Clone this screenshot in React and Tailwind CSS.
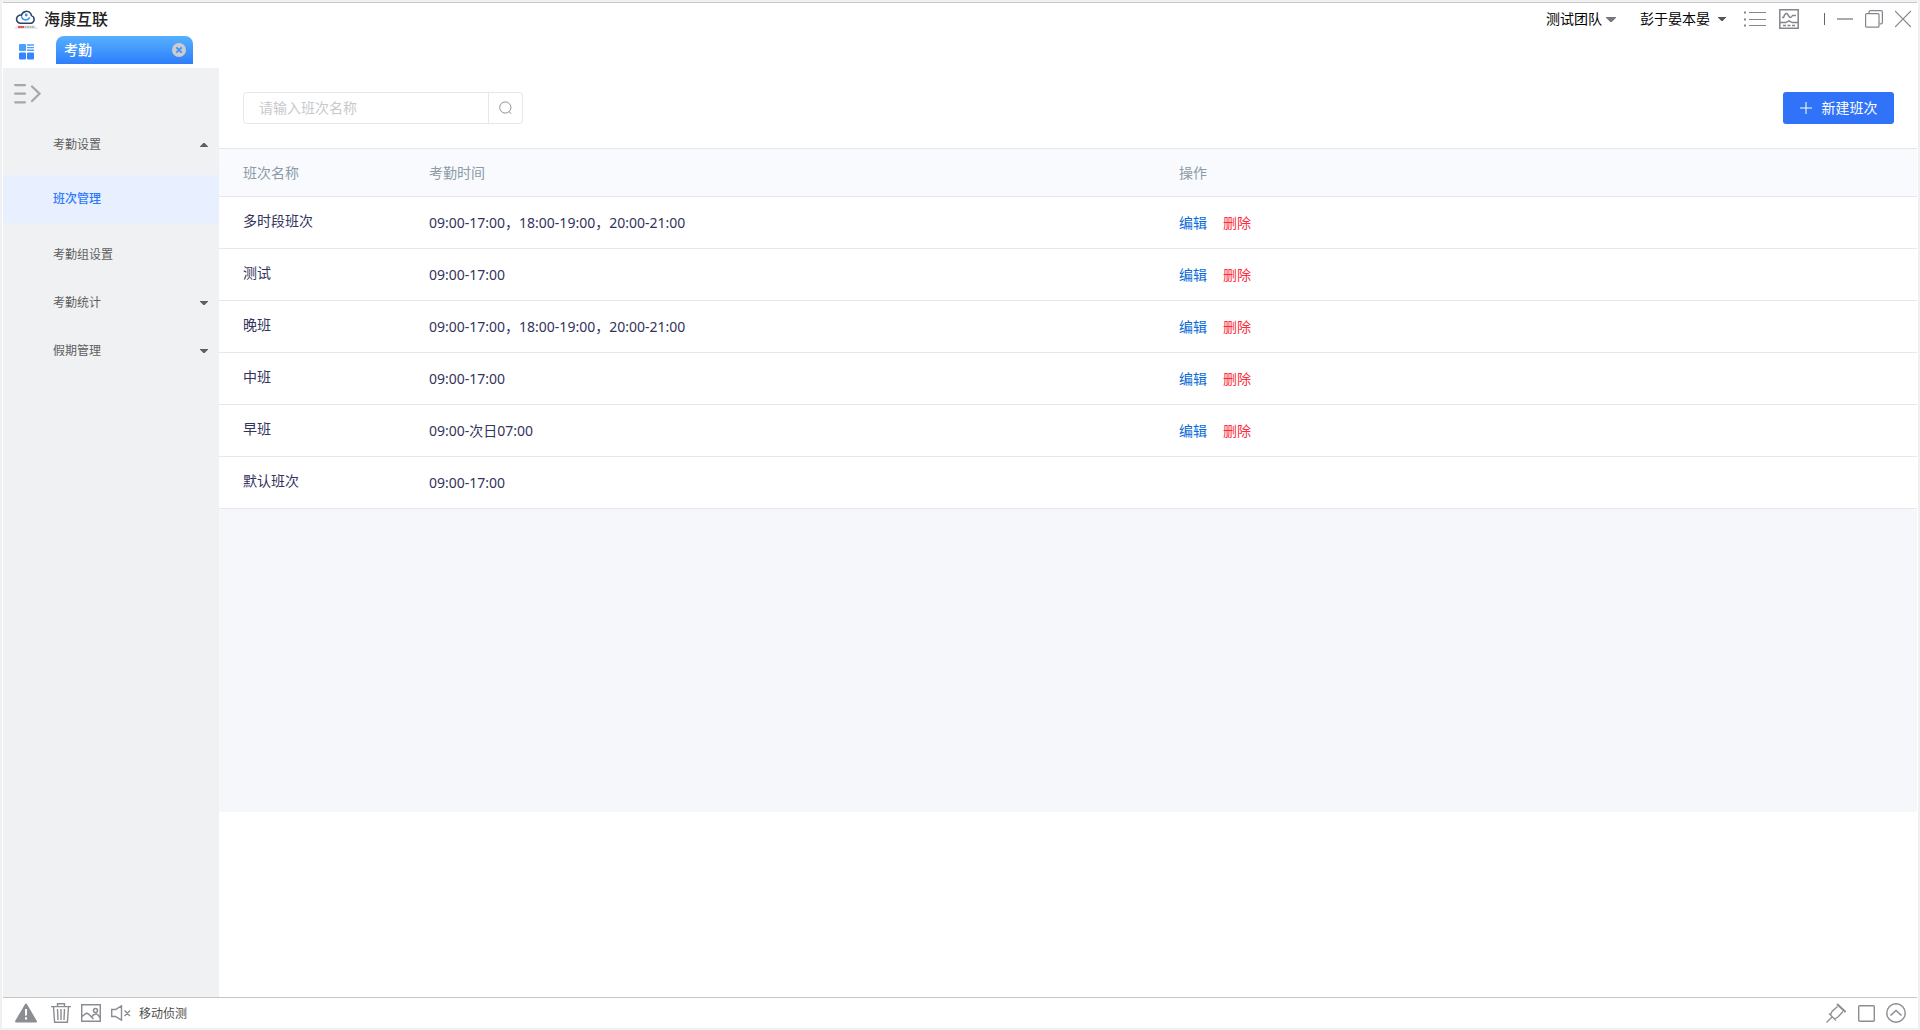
import { useState } from 'react';

const shifts = [
  { name: '多时段班次', time: '09:00-17:00，18:00-19:00，20:00-21:00', editable: true },
  { name: '测试', time: '09:00-17:00', editable: true },
  { name: '晚班', time: '09:00-17:00，18:00-19:00，20:00-21:00', editable: true },
  { name: '中班', time: '09:00-17:00', editable: true },
  { name: '早班', time: '09:00-次日07:00', editable: true },
  { name: '默认班次', time: '09:00-17:00', editable: false },
];

function Caret({ up, large }) {
  return (
    <svg width={large ? 10 : 8} height={large ? 5 : 4} viewBox="0 0 8 4" preserveAspectRatio="none">
      <path d={up ? 'M0 4V3.4L3.4 0H4.6L8 3.4V4Z' : 'M0 0H8V.6L4.6 4H3.4L0 .6Z'} fill="currentColor" />
    </svg>
  );
}

function Logo() {
  return (
    <svg width="24" height="22" viewBox="0 0 24 22" fill="none">
      <path d="M6 15.2A4.1 4.1 0 0 1 4.6 7.6Q6 6.6 7.4 7.4A5.2 5.2 0 0 1 16.8 5.6Q17.4 6.6 17.3 7.6A4 4 0 0 1 17.5 15.2Z" stroke="#2d4565" strokeWidth="1.5" strokeLinejoin="round" />
      <path d="M7.4 8.2Q8.5 12 12 12Q14.6 11.8 15.8 9.4" stroke="#3b8cf5" strokeWidth="1.4" />
      <circle cx="12.2" cy="7" r="1.4" fill="#3b8cf5" />
      <path d="M3 17.5H21L24 21H0Z" fill="#e8e8ea" />
      <path d="M4 19H10" stroke="#e0303a" strokeWidth="1.6" />
      <path d="M10.5 19H20" stroke="#8b8b90" strokeWidth="1.2" strokeDasharray="2 .5" />
    </svg>
  );
}

function TitleBar() {
  return (
    <header className="flex h-[33px] items-center justify-between border-t border-[#c8cacf] pr-1.5 pl-[11px]">
      <div className="flex items-center gap-1.5">
        <Logo />
        <h1 className="text-base leading-5 font-medium text-[#222]">海康互联</h1>
      </div>
      <div className="flex items-center text-[#85868b]">
        <button className="flex items-center gap-1 text-sm text-[#77787c]">
          <span className="text-black">测试团队</span>
          <Caret large />
        </button>
        <button className="ml-6 flex items-center gap-2 text-sm text-[#55565a]">
          <span className="text-black">彭于晏本晏</span>
          <Caret />
        </button>
        <button className="ml-[18px]" aria-label="列表">
          <svg width="22" height="16" viewBox="0 0 22 16" stroke="currentColor" fill="none">
            <path d="M5 1.5H22M5 8.5H22M5 14.5H22" />
            <path d="M0 1.5H2M0 8.5H2M0 14.5H2" strokeWidth="2" />
          </svg>
        </button>
        <button className="ml-3" aria-label="监控">
          <svg width="22" height="20" viewBox="0 0 22 20" stroke="currentColor" fill="none">
            <path d="M1.8 .8H20.2V19.2H1.8ZM2 13.5H7.5Q9.5 13.3 11 11.8Q12.5 13.3 14.5 13.5H20" strokeWidth="1.5" />
            <path d="M4 8.5H5.5Q7 4 8.7 4.5C10.5 5 10.5 8.5 12.3 8.5Q13.5 8.5 14.5 6.5H18" strokeWidth="1.5" />
            <path d="M5 16.5H17.5" strokeWidth="1.4" strokeDasharray="3 1.5" />
          </svg>
        </button>
        <span className="ml-6 h-3 w-px bg-[#66676b]" />
        <button className="ml-3" aria-label="最小化">
          <svg width="16" height="18" viewBox="0 0 16 18">
            <path d="M0 9H16" stroke="currentColor" strokeWidth="1.4" />
          </svg>
        </button>
        <button className="ml-3" aria-label="还原">
          <svg width="18" height="18" viewBox="0 0 18 18" stroke="currentColor" fill="none" strokeWidth="1.2">
            <rect x=".6" y="3.6" width="13.4" height="13.6" rx="1" />
            <path d="M4 3.6V2Q4 .6 5.4 .6H16Q17.4 .6 17.4 2V12.4Q17.4 13.8 16 13.8H14.5" />
          </svg>
        </button>
        <button className="ml-3" aria-label="关闭">
          <svg width="16" height="18" viewBox="0 0 16 18">
            <path d="M0 1L16 17M16 1L0 17" stroke="currentColor" strokeWidth="1.2" />
          </svg>
        </button>
      </div>
    </header>
  );
}

function TabBar() {
  return (
    <div className="flex h-[33px] items-start pt-px">
      <button className="mt-2 ml-4" aria-label="应用">
        <svg width="15" height="16" viewBox="0 0 15 16">
          <rect width="7" height="7" rx="1" fill="#4ba0ff" />
          <rect y="8.5" width="7" height="7" rx="1" fill="#3484fb" />
          <rect x="8" y="8.5" width="7" height="7" rx="1" fill="#3484fb" />
          <path d="M8 1H15M8 3.6H15M8 6.2H15" stroke="#4ba0ff" strokeWidth="1.4" />
        </svg>
      </button>
      <div className="ml-[22px] flex h-7 w-[137px] items-center justify-between rounded-t-lg bg-linear-to-b from-[#56b0fe] to-[#2f7dfc] pr-[7px] pl-2">
        <span className="text-sm font-medium text-white">考勤</span>
        <button aria-label="关闭标签">
          <svg width="14" height="14" viewBox="0 0 14 14" className="block">
            <circle cx="7" cy="7" r="7" fill="#ccc" />
            <path d="M4.3 4.3L9.7 9.7M9.7 4.3L4.3 9.7" stroke="#3f91fd" strokeWidth="1.8" />
          </svg>
        </button>
      </div>
    </div>
  );
}

function Sidebar() {
  return (
    <aside className="w-[216px] shrink-0 bg-[#eff1f3] text-xs text-[#5e5e5e]">
      <button className="mt-4 ml-[11px] block" aria-label="展开菜单">
        <svg width="27" height="20" viewBox="0 0 27 20" stroke="#a3a8ad" strokeWidth="2.2" strokeLinecap="round" fill="none">
          <path d="M1.1 1.1H11M1.1 9.7H11M1.1 18.3H11M18 2.5L25.5 9.7L18 17" />
        </svg>
      </button>
      <nav className="mt-[17px]">
        <a href="#settings" className="flex h-12 items-center justify-between pr-[11px] pl-[50px]">
          考勤设置
          <Caret up />
        </a>
        <a href="#shifts" className="mt-1.5 flex h-12 items-center bg-[#e8effe] pl-[50px] font-medium text-[#2d7afc]">
          班次管理
        </a>
        <a href="#groups" className="mt-2 flex h-12 items-center pl-[50px]">
          考勤组设置
        </a>
        <a href="#stats" className="flex h-12 items-center justify-between pr-[11px] pl-[50px]">
          考勤统计
          <Caret />
        </a>
        <a href="#holidays" className="flex h-12 items-center justify-between pr-[11px] pl-[50px]">
          假期管理
          <Caret />
        </a>
      </nav>
    </aside>
  );
}

function ShiftTable({ rows }) {
  return (
    <table className="w-full table-fixed border-collapse bg-white text-left text-sm text-[#33335c]">
      <thead>
        <tr className="h-12 border-y border-[#e6e7ec] bg-[#f8fafd] text-[#8c9aa8]">
          <th className="w-[210px] pl-6 font-normal">班次名称</th>
          <th className="w-[750px] font-normal">考勤时间</th>
          <th className="font-normal">操作</th>
        </tr>
      </thead>
      <tbody>
        {rows.map((row) => (
          <tr key={row.name} className="h-[52px] border-b border-[#e6e7ec]">
            <td className="pb-1 pl-6">{row.name}</td>
            <td>{row.time}</td>
            <td>
              {row.editable && (
                <div className="flex gap-4">
                  <button className="text-[#0a6ad8]">编辑</button>
                  <button className="text-[#fa2c3c]">删除</button>
                </div>
              )}
            </td>
          </tr>
        ))}
      </tbody>
    </table>
  );
}

function StatusBar() {
  return (
    <footer className="flex h-[31px] items-center justify-between border-t border-[#c4c5c8] pr-[11px] pl-3 text-[#8c8d92]">
      <div className="flex items-center">
        <button aria-label="警告">
          <svg width="22" height="20" viewBox="0 0 22 20">
            <path d="M11 1.5L21 18.5H1Z" fill="currentColor" stroke="currentColor" strokeWidth="2" strokeLinejoin="round" />
            <path d="M11 6V12.5M11 14.3V16.5" stroke="#fff" strokeWidth="2" />
          </svg>
        </button>
        <button className="ml-3.5" aria-label="清空">
          <svg width="20" height="20" viewBox="0 0 20 20" stroke="currentColor" fill="none" strokeWidth="1.4">
            <path d="M0 3.6H20M6.5 3.5V.7H13.5V3.5M2.5 4L3.6 19.3H16.4L17.5 4M6.5 6L7 17M10 6V17M13.5 6L13 17" />
          </svg>
        </button>
        <button className="ml-2.5" aria-label="图片">
          <svg width="20" height="18" viewBox="0 0 20 18" stroke="currentColor" fill="none" strokeWidth="1.5">
            <path d="M.7 .7H19.3V17.3H.7ZM1 12.5L5 9.5Q6.5 9 8 10.5L12.5 15M10.5 13Q13 9.5 15.5 10Q17.5 10.5 19 14" />
            <circle cx="14.5" cy="6.5" r="2" />
          </svg>
        </button>
        <button className="ml-2.5" aria-label="静音">
          <svg width="20" height="16" viewBox="0 0 20 16" stroke="currentColor" fill="none" strokeWidth="1.4">
            <path d="M.7 4.5H4.5L10.5 .8V15.2L4.5 11.5H.7ZM13.5 5.5L19 11M19 5.5L13.5 11" />
          </svg>
        </button>
        <span className="ml-2 pt-px text-xs text-[#4c4c4c]">移动侦测</span>
      </div>
      <div className="flex items-center">
        <button aria-label="固定">
          <svg width="20" height="20" viewBox="0 0 20 20" stroke="currentColor" fill="none" strokeWidth="1.3">
            <path d="M.5 19.5L6 14M3 10.5L10 17.5M4.5 12L6 8.5L11.5 3.5M8.5 16L12 14L17 8.5" />
            <path d="M11 1L19.5 9" strokeWidth="2" />
          </svg>
        </button>
        <button className="ml-3" aria-label="窗口">
          <svg width="17" height="17" viewBox="0 0 17 17" stroke="currentColor" fill="none" strokeWidth="1.4">
            <rect x=".7" y=".7" width="15.6" height="15.6" rx="1" />
          </svg>
        </button>
        <button className="ml-[11px]" aria-label="展开">
          <svg width="20" height="20" viewBox="0 0 20 20" stroke="currentColor" fill="none" strokeWidth="1.4">
            <circle cx="10" cy="10" r="9.2" />
            <path d="M4.5 12.5L10 7.5L15.5 12.5" strokeWidth="1.6" />
          </svg>
        </button>
      </div>
    </footer>
  );
}

export default function App() {
  const [query, setQuery] = useState('');
  const rows = shifts.filter((s) => s.name.includes(query));

  return (
    <div className="flex min-h-screen flex-col bg-[#f0f0f1] p-0.5 font-['Noto_Sans','Noto_Sans_CJK_SC',sans-serif]">
      <div className="flex grow flex-col bg-white px-px">
        <TitleBar />
        <TabBar />
        <div className="flex grow">
          <Sidebar />
          <main className="min-w-0 grow">
            <div className="flex items-center justify-between py-6 pr-[23px] pl-6">
              <form className="flex h-8 w-[280px] rounded border border-[#e6e7ec]" onSubmit={(e) => e.preventDefault()}>
                <input
                  className="min-w-0 grow px-[15px] text-sm text-[#33335c] outline-none placeholder:text-[#c8c9cc]"
                  placeholder="请输入班次名称"
                  aria-label="班次名称"
                  value={query}
                  onChange={(e) => setQuery(e.target.value)}
                />
                <button className="flex w-[34px] items-center justify-center border-l border-[#e6e7ec]" aria-label="搜索">
                  <svg width="14" height="14" viewBox="0 0 14 14" stroke="#8f9094" fill="none">
                    <circle cx="6.3" cy="6.5" r="5.6" />
                    <path d="M10 10.5L12.3 12.7" />
                  </svg>
                </button>
              </form>
              <button className="flex h-8 w-[111px] items-center justify-center gap-2.5 rounded-[3px] bg-[#3173f8] text-sm text-white">
                <svg width="12" height="12" viewBox="0 0 12 12">
                  <path d="M6 0V12M0 6H12" stroke="#fff" />
                </svg>
                新建班次
              </button>
            </div>
            <div className="min-h-[664px] bg-[#f5f7fb]">
              <ShiftTable rows={rows} />
            </div>
          </main>
        </div>
        <StatusBar />
      </div>
    </div>
  );
}
